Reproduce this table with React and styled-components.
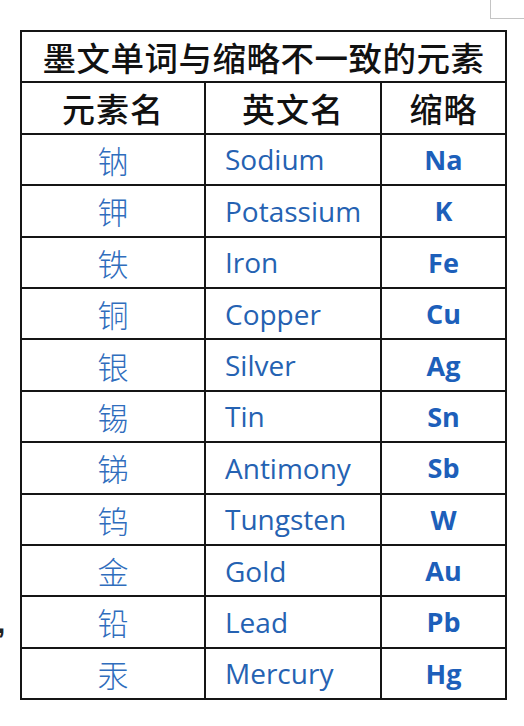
import React from 'react';
import styled, { createGlobalStyle } from 'styled-components';

const GlobalStyle = createGlobalStyle`
  html, body {
    margin: 0;
    padding: 0;
    background: #ffffff;
  }
`;

const Page = styled.div`
  position: relative;
  width: 524px;
  height: 726px;
  overflow: hidden;
  padding: 30px 0 0 20px;
  box-sizing: border-box;
  background: #fff;
`;

const CornerBox = styled.div`
  position: absolute;
  top: -2px;
  left: 490px;
  width: 60px;
  height: 19px;
  border: 1px solid #c4c4c4;
`;

const Comma = styled.span`
  position: absolute;
  left: -3px;
  top: 606px;
  font-family: 'Liberation Sans', sans-serif;
  font-size: 30px;
  font-weight: 700;
  color: #222;
`;

const Table = styled.table`
  width: 485px;
  border-collapse: collapse;
  table-layout: fixed;
  border: 2px solid #151515;
`;

const Cell = styled.td`
  height: 49.4px;
  padding: 0;
  border: 2px solid #151515;
  text-align: ${(p) => p.$align || 'center'};
  padding-left: ${(p) => (p.$align === 'left' ? '19px' : '0')};
  vertical-align: middle;
  white-space: nowrap;
  line-height: 1;
`;

const TitleCell = styled(Cell)`
  font-family: 'Noto Sans CJK SC', sans-serif;
  font-size: 33.5px;
  font-weight: 500;
  color: #111;
  letter-spacing: 0.5px;
`;

const HeadCell = styled(Cell)`
  font-family: 'Noto Sans CJK SC', sans-serif;
  font-size: 33px;
  font-weight: 500;
  color: #111;
  letter-spacing: 1px;
`;

const NameCell = styled(Cell)`
  font-family: 'Noto Sans CJK SC', sans-serif;
  font-size: 31px;
  font-weight: 300;
  color: #2f6dbd;
`;

const EnCell = styled(Cell)`
  font-family: 'Open Sans', 'Noto Sans', sans-serif;
  font-size: 28px;
  font-weight: 400;
  color: #2562b2;
`;

const AbbrCell = styled(Cell)`
  font-family: 'Open Sans', 'Noto Sans', sans-serif;
  font-size: 27px;
  font-weight: 700;
  color: #1d5fba;
`;

const elements = [
  ['钠', 'Sodium', 'Na'],
  ['钾', 'Potassium', 'K'],
  ['铁', 'Iron', 'Fe'],
  ['铜', 'Copper', 'Cu'],
  ['银', 'Silver', 'Ag'],
  ['锡', 'Tin', 'Sn'],
  ['锑', 'Antimony', 'Sb'],
  ['钨', 'Tungsten', 'W'],
  ['金', 'Gold', 'Au'],
  ['铅', 'Lead', 'Pb'],
  ['汞', 'Mercury', 'Hg'],
];

const App = () => {
  return (
    <>
      <GlobalStyle />
      <Page>
        <CornerBox />
        <Comma>,</Comma>
        <Table>
          <colgroup>
            <col style={{ width: 184 }} />
            <col style={{ width: 176 }} />
            <col style={{ width: 125 }} />
          </colgroup>
          <tbody>
            <tr>
              <TitleCell colSpan={3}>墨文单词与缩略不一致的元素</TitleCell>
            </tr>
            <tr>
              <HeadCell>元素名</HeadCell>
              <HeadCell>英文名</HeadCell>
              <HeadCell>缩略</HeadCell>
            </tr>
            {elements.map(([cn, en, abbr]) => (
              <tr key={abbr}>
                <NameCell>{cn}</NameCell>
                <EnCell $align="left">{en}</EnCell>
                <AbbrCell>{abbr}</AbbrCell>
              </tr>
            ))}
          </tbody>
        </Table>
      </Page>
    </>
  );
};

export default App;
